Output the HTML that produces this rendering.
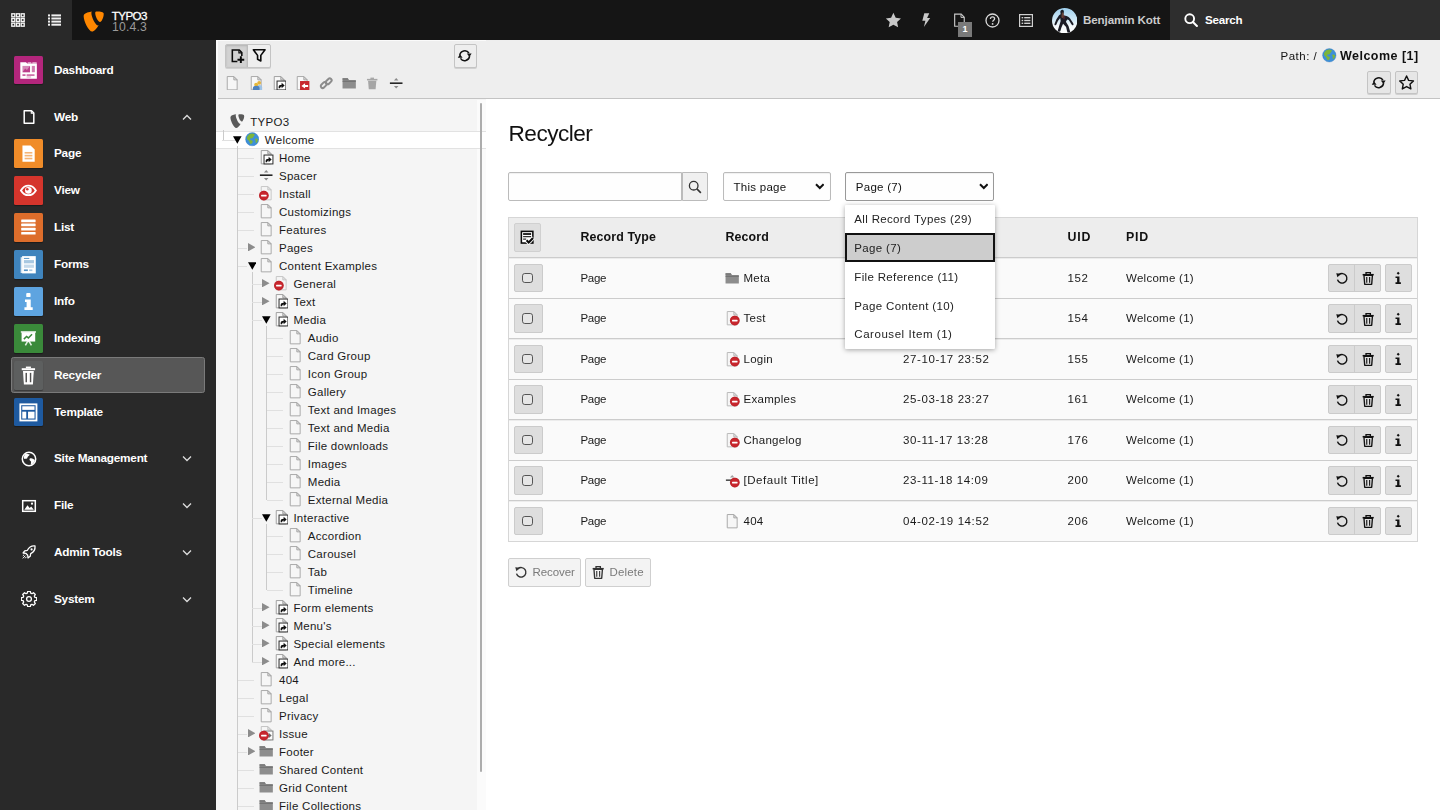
<!DOCTYPE html>
<html lang="en"><head><meta charset="utf-8"><title>Recycler - TYPO3</title>
<style>
*{box-sizing:border-box;margin:0;padding:0}
html,body{width:1440px;height:810px;overflow:hidden;background:#fff}
body{position:relative;font-family:"Liberation Sans",sans-serif;font-size:11.6px;color:#111;line-height:16px}
.abs,.tt,.ti,.td,.ml,.mi,.gi,.chev,.ta,.vl,.hl,.tr,.cb,.bg2,.bi,.tsel,.mact{position:absolute}
svg{display:block}
/* top bar */
#top{position:absolute;left:0;top:0;width:1440px;height:40px;background:#151515}
#topl{position:absolute;left:0;top:0;width:72px;height:40px;background:#292929}
#search{position:absolute;left:1170px;top:0;width:270px;height:40px;background:#2e2e2e}
.tb{position:absolute;color:#ccc;font-weight:bold;white-space:nowrap}
/* module menu */
#menu{position:absolute;left:0;top:40px;width:216px;height:770px;background:#292929}
.mi{left:14.3px;width:28.8px;height:28.8px;border-radius:1.5px;box-shadow:0 1px 1px rgba(0,0,0,.35)}
.gi{left:20.6px}
.ml{left:54px;color:#fff;font-weight:bold;font-size:11.800px;letter-spacing:-.25px;white-space:nowrap;line-height:16px}
.chev{left:182px}
.mact{left:11.300px;top:357.200px;width:193.400px;height:35.800px;background:#575757;border:1px solid #7a7a7a;border-radius:2.500px}
/* tree */
#treebar{position:absolute;left:216px;top:40px;width:270px;height:58.500px;background:#eeeeee;border-bottom:1px solid #c3c3c3}
#tree{position:absolute;left:216px;top:98.500px;width:270px;height:712px;background:#f5f5f5}
.tt{white-space:nowrap;font-size:11.500px;letter-spacing:.27px;color:#1a1a1a;line-height:16px}
.vl{width:1px;background:#cbcbcb}
.hl{height:1px;background:#e0e0e0}
.tsel{left:216px;width:270px;height:18px;background:#fff;border-top:1px solid #e2e2e2;border-bottom:1px solid #e2e2e2}
#sb{position:absolute;left:479.800px;top:103px;width:2.300px;height:669px;background:#adadad;border-radius:1px}
/* doc header */
#dochead{position:absolute;left:486px;top:40px;width:954px;height:58.500px;background:#eeeeee;border-bottom:1px solid #c3c3c3}
.btn{position:absolute;background:#e6e6e6;border:1px solid #c4c4c4;border-radius:2px;box-shadow:0 1px 0 rgba(0,0,0,.12)}
.btn svg{position:absolute}
/* content */
h1{position:absolute;left:508.500px;top:119px;font-size:22.600px;font-weight:normal;letter-spacing:-.5px;line-height:30px;color:#111}
.inp{position:absolute;background:#fefefe;border:1px solid #bbb;border-radius:2px;box-shadow:inset 0 1px 1px rgba(0,0,0,.06)}
.sel span{position:absolute;left:9.500px;top:5.700px;font-size:11.500px;letter-spacing:.27px;white-space:nowrap}
.sel svg{position:absolute;right:5.200px;top:10.300px}
#tbl{position:absolute;left:508px;top:217px;width:910px;height:325px;background:#fafafa;border:1px solid #d6d6d6}
#thead{position:absolute;left:509px;top:218px;width:908px;height:39px;background:#ededed}
.th{position:absolute;top:229.200px;font-weight:bold;font-size:12.400px;letter-spacing:.12px;line-height:16px;white-space:nowrap}
.tr{left:509px;width:908px;height:1px;background:#ccc}
.td{white-space:nowrap;font-size:11.500px;letter-spacing:.27px;line-height:16px;color:#1a1a1a}
.cb{left:514px;width:29px;height:28.500px;background:#dedede;border:1px solid #cbcbcb;border-radius:2px}
.cb i{position:absolute;left:7.200px;top:7.800px;width:10.500px;height:10.500px;border:1.500px solid #555;border-radius:2.800px;background:#e6e6e6}
.bg2{left:1328px;width:53px;height:28.500px;background:#dedede;border:1px solid #cbcbcb;border-radius:2px}
.bg2 b{position:absolute;left:25px;top:0;width:1px;height:100%;background:#cbcbcb}
.bg2 span,.bi span{position:absolute;top:6.300px}
.bi{left:1385px;width:27px;height:28.500px;background:#dedede;border:1px solid #cbcbcb;border-radius:2px}
.bi span{left:5.300px}
/* dropdown */
.dd{position:absolute;left:845px;top:204.500px;width:149.500px;height:144px;background:#fff;box-shadow:0 1px 5px rgba(0,0,0,.35);border-radius:1px}
.op{position:absolute;left:0;width:100%;height:28.800px}
.op span{position:absolute;left:9.300px;top:6.100px;font-size:11.500px;letter-spacing:.27px;white-space:nowrap;color:#222}
.op.sel{background:#cdcdcd;border:2px solid #111}
.op.sel span{left:7.300px;top:4.100px}
.fbtn{position:absolute;top:558px;height:29px;background:#f3f3f3;border:1px solid #cfcfcf;border-radius:2px;color:#7a7a7a;font-size:11.500px;letter-spacing:.15px}
.fbtn svg{position:absolute;left:4.800px;top:6.300px}
.fbtn span{position:absolute;left:23.600px;top:5.300px}
#wrap{position:absolute;left:0;top:0;width:1440px;height:810px;overflow:hidden;filter:blur(.25px)}

</style></head>
<body>
<div id="wrap">
<div id="top"></div>
<div id="topl"></div>
<div id="search"></div>
<!-- topbar left icons -->
<svg class="abs" style="left:11px;top:13px" width="14" height="14" viewBox="0 0 14 14"><g fill="none" stroke="#f4f4f4" stroke-width="1.350"><rect x=".8" y=".8" width="3" height="3"/><rect x="5.500" y=".8" width="3" height="3"/><rect x="10.200" y=".8" width="3" height="3"/><rect x=".8" y="5.500" width="3" height="3"/><rect x="5.500" y="5.500" width="3" height="3"/><rect x="10.200" y="5.500" width="3" height="3"/><rect x=".8" y="10.200" width="3" height="3"/><rect x="5.500" y="10.200" width="3" height="3"/><rect x="10.200" y="10.200" width="3" height="3"/></g></svg>
<svg class="abs" style="left:47.500px;top:14px" width="13" height="12" viewBox="0 0 13 12"><g fill="#f0f0f0"><rect x="0" y=".4" width="2" height="2"/><rect x="3.400" y=".4" width="9.600" height="2"/><rect x="0" y="3.500" width="2" height="2"/><rect x="3.400" y="3.500" width="9.600" height="2"/><rect x="0" y="6.600" width="2" height="2"/><rect x="3.400" y="6.600" width="9.600" height="2"/><rect x="0" y="9.700" width="2" height="2"/><rect x="3.400" y="9.700" width="9.600" height="2"/></g></svg>
<!-- logo -->
<svg class="abs" style="left:82.500px;top:10.500px" width="21" height="21" viewBox="0 0 16 16"><path d="M11.9 10.900c-.2.100-.4.100-.6.100-2 0-4.900-6.900-4.900-9.200 0-.9.200-1.100.5-1.400C4.500.7 1.700 1.600.8 2.700.6 3 .5 3.400.5 4c0 3.600 3.800 11.700 6.500 11.700 1.300 0 3.400-2 4.900-4.800" fill="#ff8700"/><path d="M10.800.3c2.500 0 5 .4 5 1.800 0 2.900-1.800 6.300-2.800 6.300-1.600 0-3.700-4.600-3.700-6.900C9.300.5 9.700.3 10.800.3" fill="#ff8700"/></svg>
<div class="abs" style="left:111.700px;top:8.800px;color:#fff;font-size:11.600px;line-height:13px;letter-spacing:-.55px;white-space:nowrap;-webkit-text-stroke:.3px #fff">TYPO3</div>
<div class="abs" style="left:112px;top:21.300px;color:#9a9a9a;font-size:12.200px;line-height:13px;letter-spacing:.2px;white-space:nowrap">10.4.3</div>
<!-- topbar right icons -->
<svg class="abs" style="left:884.500px;top:11.700px" width="16.800" height="16.800" viewBox="0 0 16 16"><path d="M8 .8l2.200 4.700 5 .6-3.700 3.500 1 5L8 12.100l-4.500 2.500 1-5L.8 6.100l5-.6z" fill="#c8c8c8"/></svg>
<svg class="abs" style="left:920px;top:12px" width="12" height="16" viewBox="0 0 12 16"><path d="M4.300 1.200h5L7.100 6h3.100L3.900 15l1.500-6.200H2.300z" fill="#c8c8c8"/></svg>
<svg class="abs" style="left:953px;top:13.300px" width="13.500" height="14.400" viewBox="0 0 14 15"><path d="M1.700 1.200h6.800l3.200 3.200v9.400H1.700z" fill="none" stroke="#c8c8c8" stroke-width="1.200"/><path d="M8.300 1.400v3.200h3.200" fill="none" stroke="#c8c8c8" stroke-width="1"/></svg>
<div class="abs" style="left:957.800px;top:22px;width:14.300px;height:15.100px;background:#7a7a7a;color:#fff;font-size:9px;font-weight:bold;line-height:15.600px;text-align:center">1</div>
<svg class="abs" style="left:984.500px;top:12.500px" width="15" height="15" viewBox="0 0 15 15"><circle cx="7.500" cy="7.500" r="6.500" fill="none" stroke="#d8d8d8" stroke-width="1.300"/><path d="M5.400 5.900c0-1.300.9-2.100 2.100-2.100s2.100.8 2.100 1.900c0 1.500-1.900 1.600-1.900 3.100" fill="none" stroke="#d8d8d8" stroke-width="1.300"/><circle cx="7.600" cy="10.900" r=".9" fill="#d8d8d8"/></svg>
<svg class="abs" style="left:1019px;top:13.500px" width="14" height="13" viewBox="0 0 14 13"><rect x=".6" y=".6" width="12.800" height="11.800" fill="none" stroke="#d0d0d0" stroke-width="1.200"/><g fill="#d0d0d0"><rect x="2.600" y="3" width="1.600" height="1.400"/><rect x="5.200" y="3" width="6.200" height="1.400"/><rect x="2.600" y="5.800" width="1.600" height="1.400"/><rect x="5.200" y="5.800" width="6.200" height="1.400"/><rect x="2.600" y="8.600" width="1.600" height="1.400"/><rect x="5.200" y="8.600" width="6.200" height="1.400"/></g></svg>
<!-- avatar -->
<svg class="abs" style="left:1051.900px;top:7.700px" width="25.400" height="25.400" viewBox="0 0 25.400 25.400"><defs><clipPath id="av"><circle cx="12.700" cy="12.700" r="12.700"/></clipPath><linearGradient id="sky" x1="0" y1="0" x2="0" y2="1"><stop offset="0" stop-color="#9fd0ee"/><stop offset=".45" stop-color="#cfe8f6"/><stop offset=".7" stop-color="#f4f8fb"/><stop offset="1" stop-color="#ffffff"/></linearGradient><filter id="bl" x="-20%" y="-20%" width="140%" height="140%"><feGaussianBlur stdDeviation=".45"/></filter></defs><g clip-path="url(#av)"><rect width="25.400" height="25.400" fill="url(#sky)"/><g filter="url(#bl)"><path d="M8.300 3.800c.3-1.500 1.500-2.300 2.500-2 1 .3 1.300 1.500 1 2.800l-.5 2.600 3.300.8c1.500.4 2.600 1.300 3.500 2.600l2.800 4.200c.7 1 .9 2.200.2 2.500-.7.300-1.300-.4-1.800-1.300l-2.500-4-1.600-.6-1.300 2.300 2.600 4.300 1.700 5.800c.2.800-.5 1.100-1.300 1l-1.500-.3-1.300-5.500-3-3.300-1.600 3.500-1.100 3.900c-.2.700-1.100.8-1.900.6-.7-.2-.8-.7-.6-1.400l1.300-4.600 1.500-4.700-.5-3.100-2.300 3.100-1.500 3.600c-.3.700-1 .9-1.500.6-.5-.3-.5-.9-.3-1.500l1.700-4.100 2.600-4c.5-.8 1-1.200 1.800-1.300z" fill="#1b1d26"/><path d="M10 4.500c.8-.2 1.600.3 1.700 1.200l.3 2.600c.1 1-.5 1.700-1.300 1.800-.8 0-1.300-.7-1.300-1.600z" fill="#7a4a3a" opacity=".8"/><path d="M11.500 7.500l2 .8-.8 3.200-1.700-.4z" fill="#5a2a30" opacity=".7"/></g></g></svg>
<div class="tb" style="left:1083px;top:12px;font-size:11.600px;letter-spacing:-.1px">Benjamin Kott</div>
<svg class="abs" style="left:1184px;top:13px" width="14" height="14" viewBox="0 0 14 14"><circle cx="5.700" cy="5.700" r="4.400" fill="none" stroke="#fff" stroke-width="1.900"/><path d="M8.900 8.900l4 4" stroke="#fff" stroke-width="2.100" stroke-linecap="round"/></svg>
<div class="tb" style="left:1205px;top:12px;color:#fff;font-size:11.600px;letter-spacing:-.2px">Search</div>

<!-- module menu -->
<div id="menu"></div>
<div class="mact"></div>
<div class="mi" style="top:55.6px;background:#b3267c;"><svg width="28.8" height="28.8" viewBox="0 0 16 16" style=""><path d="M3.500 3.500h3.200l.6.700h5.400v8.400H3.500z" fill="#fff"/><rect x="7.600" y="3.600" width="2" height=".5" fill="#fff"/><rect x="10.200" y="3.600" width="2.400" height=".5" fill="#fff"/><rect x="4.700" y="5.500" width="4.200" height="3.500" fill="#b3267c" opacity=".55"/><path d="M4.700 9l1.500-2 1 .8 1.700-2.200V9z" fill="#b3267c" opacity=".75"/><rect x="9.900" y="5.500" width="1.700" height="3.500" fill="#b3267c" opacity=".6"/><rect x="4.700" y="10.200" width="1.700" height=".8" fill="#b3267c" opacity=".9"/><rect x="7" y="10.200" width="4.400" height=".8" fill="#b3267c" opacity=".8"/><rect x="7" y="11.400" width="2.500" height=".5" fill="#b3267c" opacity=".5"/></svg></div>
<div class="ml" style="top:61.5px">Dashboard</div>
<div class="mi" style="top:139.4px;background:#f08c29;"><svg width="28.8" height="28.8" viewBox="0 0 16 16" style=""><path d="M4.700 3.600h4.500l2.300 2.300v6.700H4.700z" fill="#fff"/><rect x="5.900" y="7.200" width="4.300" height=".9" fill="#f08c29" opacity=".65"/><rect x="5.900" y="8.800" width="4.300" height=".9" fill="#f08c29" opacity=".65"/><rect x="5.900" y="10.400" width="4.300" height=".9" fill="#f08c29" opacity=".65"/></svg></div>
<div class="ml" style="top:145.3px">Page</div>
<div class="mi" style="top:176.3px;background:#d5352c;"><svg width="28.8" height="28.8" viewBox="0 0 16 16" style=""><g transform="translate(8 8) scale(.88) translate(-8 -8)"><path d="M3.300 8c1.200-2 2.900-3 4.700-3s3.500 1 4.700 3c-1.200 2-2.900 3-4.700 3s-3.500-1-4.700-3z" fill="none" stroke="#fff" stroke-width="1.200"/><circle cx="8" cy="8" r="2.100" fill="#fff"/><circle cx="7.300" cy="7.300" r=".8" fill="#d5352c"/></g></svg></div>
<div class="ml" style="top:182.2px">View</div>
<div class="mi" style="top:213.2px;background:#dd6d2b;"><svg width="28.8" height="28.8" viewBox="0 0 16 16" style=""><rect x="4" y="3.6" width="8" height="1.500" rx=".3" fill="#fff"/><rect x="4" y="5.9" width="8" height="1.500" rx=".3" fill="#fff"/><rect x="4" y="8.2" width="8" height="1.500" rx=".3" fill="#fff"/><rect x="4" y="10.5" width="8" height="1.500" rx=".3" fill="#fff"/></svg></div>
<div class="ml" style="top:219.1px">List</div>
<div class="mi" style="top:250.1px;background:#3f84bd;"><svg width="28.8" height="28.8" viewBox="0 0 16 16" style=""><rect x="3.700" y="4" width="1" height="8.800" fill="#fff" opacity=".8"/><rect x="4.500" y="3.400" width="7.600" height="9.600" fill="#fff"/><rect x="5.500" y="4.400" width="3" height=".6" fill="#3f84bd" opacity=".8"/><rect x="5.500" y="5.600" width="5.600" height="1.800" fill="#3f84bd" opacity=".45"/><rect x="5.500" y="8.100" width="5.600" height="1.800" fill="#3f84bd" opacity=".3"/><rect x="5.500" y="10.800" width="2.200" height=".9" fill="#3f84bd" opacity=".9"/><rect x="8.400" y="10.800" width="1.800" height=".9" fill="#3f84bd" opacity=".45"/></svg></div>
<div class="ml" style="top:256.0px">Forms</div>
<div class="mi" style="top:287.0px;background:#5ea4e0;"><svg width="28.8" height="28.8" viewBox="0 0 16 16" style=""><rect x="6.800" y="3.400" width="2.400" height="2.200" rx=".5" fill="#fff"/><path d="M6.100 6.900h3.200v4.300h1.100v1.600H5.800v-1.600h1.200V8.400H6.100z" fill="#fff"/></svg></div>
<div class="ml" style="top:292.9px">Info</div>
<div class="mi" style="top:323.9px;background:#3a8a3a;"><svg width="28.8" height="28.8" viewBox="0 0 16 16" style=""><g transform="translate(8 7.900) scale(.84) translate(-8 -8)"><rect x="3.500" y="4" width="9" height="6.200" fill="#fff"/><path d="M5 8.600l1.800-1.800 1.200 1 2.400-2.400" stroke="#3a8a3a" stroke-width="1" fill="none"/><path d="M6 12.800l1.400-2.600h1.200l1.400 2.600" stroke="#fff" stroke-width="1" fill="none" opacity=".85"/><rect x="3" y="3.400" width="10" height=".9" fill="#fff"/></g></svg></div>
<div class="ml" style="top:329.8px">Indexing</div>
<div class="mi" style="top:360.8px;background:#5d5f5f;"><svg width="28.8" height="28.8" viewBox="0 0 16 16" style=""><path d="M5 5.500h6l-.5 7.500h-5z" fill="#fff"/><rect x="4.300" y="4" width="7.400" height="1.100" fill="#fff"/><rect x="6.600" y="3.100" width="2.800" height="1" fill="#fff"/><rect x="6.400" y="6.600" width=".8" height="5.200" fill="#505050"/><rect x="8.800" y="6.600" width=".8" height="5.200" fill="#505050"/></svg></div>
<div class="ml" style="top:366.7px">Recycler</div>
<div class="mi" style="top:397.7px;background:#1e5aa0;"><svg width="28.8" height="28.8" viewBox="0 0 16 16" style=""><rect x="3.500" y="3.500" width="9" height="9" fill="none" stroke="#fff" stroke-width="1"/><rect x="4.600" y="4.600" width="6.800" height="2" fill="#fff"/><rect x="4.600" y="7.600" width="2.200" height="3.800" fill="#fff"/><rect x="7.800" y="7.600" width="3.600" height="3.800" fill="#fff"/></svg></div>
<div class="ml" style="top:403.6px">Template</div>
<div class="gi" style="top:109.0px"><svg width="16" height="16" viewBox="0 0 16 16" style=""><path d="M3.200 1.700h7.300l2.300 2.300v10.300H3.200z" fill="none" stroke="#fff" stroke-width="1.500" stroke-linejoin="round"/><path d="M10.300 1.900v2.300h2.300" fill="none" stroke="#fff" stroke-width="1.100"/></svg></div>
<div class="ml" style="top:108.5px">Web</div>
<svg class="chev" style="top:113.5px" width="10" height="7" viewBox="0 0 10 7"><path d="M1 5.500L5 1.500l4 4" fill="none" stroke="#ddd" stroke-width="1.300"/></svg>
<div class="gi" style="top:450.8px"><svg width="16" height="16" viewBox="0 0 16 16" style=""><circle cx="8" cy="8" r="6.700" fill="none" stroke="#fff" stroke-width="1.500"/><path d="M4.600 2.800c1.500-.4 2.400.7 3.900.4.300 1.200-.7 1.600-1.500 2.200-.8.600-.2 1.600-1.200 2.100-.9.500-1.900-.2-2.700.4-.5-1.800.1-3.900 1.500-5.100zM9.300 7.300c1.100-.3 2.200.1 2.900.8.600.6 1.200.4 1.700 1-.4 2-1.800 3.900-3.700 4.700-.7-.8-.2-1.800-.1-2.700.1-1.100-1.200-1.300-1.500-2.200-.3-.7.100-1.400.7-1.600z" fill="#fff"/></svg></div>
<div class="ml" style="top:450.3px">Site Management</div>
<svg class="chev" style="top:455.3px" width="10" height="7" viewBox="0 0 10 7"><path d="M1 1.500l4 4 4-4" fill="none" stroke="#ddd" stroke-width="1.300"/></svg>
<div class="gi" style="top:497.6px"><svg width="16" height="16" viewBox="0 0 16 16" style=""><rect x="1.700" y="2.700" width="12.600" height="10.600" fill="none" stroke="#fff" stroke-width="1.500"/><path d="M3.300 11.700l3.200-4.400 2.100 2.700 1.600-1.600 2.600 3.300z" fill="#fff"/><circle cx="11" cy="5.700" r="1.100" fill="#fff"/></svg></div>
<div class="ml" style="top:497.1px">File</div>
<svg class="chev" style="top:502.1px" width="10" height="7" viewBox="0 0 10 7"><path d="M1 1.500l4 4 4-4" fill="none" stroke="#ddd" stroke-width="1.300"/></svg>
<div class="gi" style="top:544.4px"><svg width="16" height="16" viewBox="0 0 16 16" style=""><path d="M14 2c-3.300-.4-6 1.200-7.600 4.300l-2.700.5-1.600 2.200 2.700.3 1.900 1.900.3 2.700 2.200-1.600.5-2.700c3.100-1.600 4.700-4.300 4.300-7.600z" fill="none" stroke="#fff" stroke-width="1.300" stroke-linejoin="round"/><circle cx="10.600" cy="5.400" r="1.100" fill="#fff"/><path d="M4.300 11.700l-2.500 2.700M5.400 12.800l-1.200 1.500M3.200 10.700l-1.400 1.200" stroke="#fff" stroke-width="1"/></svg></div>
<div class="ml" style="top:543.9px">Admin Tools</div>
<svg class="chev" style="top:548.9px" width="10" height="7" viewBox="0 0 10 7"><path d="M1 1.500l4 4 4-4" fill="none" stroke="#ddd" stroke-width="1.300"/></svg>
<div class="gi" style="top:591.2px"><svg width="16" height="16" viewBox="0 0 16 16" style=""><path d="M6.700 1.300h2.600l.4 1.900 1.200.5 1.600-1 1.800 1.800-1 1.600.5 1.200 1.900.4v2.600l-1.900.4-.5 1.200 1 1.600-1.800 1.800-1.600-1-1.200.5-.4 1.900H6.700l-.4-1.900-1.200-.5-1.600 1-1.800-1.800 1-1.600-.5-1.200-1.900-.4V7.700l1.900-.4.5-1.200-1-1.600 1.800-1.800 1.600 1 1.200-.5z" fill="none" stroke="#fff" stroke-width="1.300" stroke-linejoin="round" transform="translate(0 -1)"/><circle cx="8" cy="8" r="2.400" fill="none" stroke="#fff" stroke-width="1.300"/></svg></div>
<div class="ml" style="top:590.7px">System</div>
<svg class="chev" style="top:595.7px" width="10" height="7" viewBox="0 0 10 7"><path d="M1 1.500l4 4 4-4" fill="none" stroke="#ddd" stroke-width="1.300"/></svg>

<!-- tree toolbar -->
<div id="treebar"></div>
<div class="abs" style="left:216px;top:40px;width:270px;height:1px;background:#fafafa"></div><div class="abs" style="left:216px;top:40px;width:1.500px;height:770px;background:#fbfbfb"></div>
<div class="btn" style="left:225px;top:44px;width:46px;height:23.500px;background:#eee"></div>
<div class="abs" style="left:226px;top:45px;width:22px;height:21.500px;background:#d2d2d2;border-right:1px solid #bcbcbc;border-radius:1px 0 0 1px;box-shadow:inset 0 1px 2px rgba(0,0,0,.15)"></div>
<svg class="abs" style="left:229.600px;top:47.800px" width="15.500" height="15.500" viewBox="0 0 16 16"><path d="M7.600 14H2.400V2h7.200l2.600 2.600v3.600" fill="none" stroke="#0a0a0a" stroke-width="1.600"/><path d="M9.200 2.400v2.700h2.700" fill="none" stroke="#0a0a0a" stroke-width="1.200"/><path d="M11.200 8.600v7M7.700 12.100h7" stroke="#0a0a0a" stroke-width="2"/></svg>
<svg class="abs" style="left:252.300px;top:48px" width="14.400" height="14.400" viewBox="0 0 16 16"><path d="M1.500 2h13L9.800 8.200v6.300L6.200 12.600V8.200z" fill="none" stroke="#0a0a0a" stroke-width="1.800" stroke-linejoin="round"/></svg>
<div class="btn" style="left:453.500px;top:44px;width:23px;height:23.500px;background:#eee"></div>
<svg class="abs refresh" style="left:457.400px;top:48px" width="15.400" height="15.400" viewBox="0 0 16 16"><path d="M2.900 7.600A5.200 5.200 0 0 1 12.400 5.200" fill="none" stroke="#111" stroke-width="1.600"/><path d="M13.100 8.400A5.200 5.200 0 0 1 3.600 10.800" fill="none" stroke="#111" stroke-width="1.600"/><path d="M10.200 5.800h5l-2.300 3.600zM5.800 10.200h-5l2.300-3.600z" fill="#111"/></svg>
<div class="abs" style="left:225.2px;top:75.700px"><svg width="14.4" height="14.4" viewBox="0 0 16 16" style=""><path d="M2.5 .6h7.3l3.700 3.700v11.100h-11z" fill="#f6f6f6" stroke="#a2a2a2" stroke-width="1"/><path d="M9.800 .6v3.700h3.700z" fill="#dcdcdc" stroke="#a2a2a2" stroke-width="1" stroke-linejoin="round"/></svg></div>
<div class="abs" style="left:248.5px;top:75.700px"><svg width="14.400" height="14.400" viewBox="0 0 16 16"><path d="M2.500 .6h7.300l3.700 3.700v11.100h-11z" fill="#f8f8f8" stroke="#a2a2a2"/><path d="M9.800 .6v3.700h3.700z" fill="#dcdcdc" stroke="#a2a2a2" stroke-linejoin="round"/><circle cx="11.300" cy="7.600" r="2.100" fill="#e3b23c"/><path d="M8 15.600v-3q0-2.600 3.300-2.600t3.300 2.600v3z" fill="#9ec3e6"/><circle cx="8" cy="9.600" r="2.200" fill="#e8b938"/><path d="M4.300 16v-2.400q0-2.700 3.700-2.700t3.700 2.700V16z" fill="#4f82bd"/></svg></div>
<div class="abs" style="left:271.9px;top:75.700px"><svg width="14.4" height="14.4" viewBox="0 0 16 16" style=""><path d="M2.5 .6h7.3l3.700 3.700v11.100h-11z" fill="#f8f8f8" stroke="#9a9a9a"/><path d="M9.800 .6v3.700h3.700z" fill="#dcdcdc" stroke="#9a9a9a" stroke-linejoin="round"/><rect x="5.600" y="5.600" width="9.900" height="9.900" fill="#fff" stroke="#2a2a2a" stroke-width="1.100"/><path d="M7.400 13.600v-1.300q0-2.700 3.300-2.700V7.600l3.400 3-3.400 3v-2q-1.700 0-1.700 2z" fill="#111"/></svg></div>
<div class="abs" style="left:295.2px;top:75.700px"><svg width="14.400" height="14.400" viewBox="0 0 16 16"><path d="M2.500 .6h7.300l3.700 3.700v11.100h-11z" fill="#f8f8f8" stroke="#a2a2a2"/><path d="M9.800 .6v3.700h3.700z" fill="#dcdcdc" stroke="#a2a2a2" stroke-linejoin="round"/><rect x="5.600" y="5.600" width="10.400" height="10.400" fill="#c8262d"/><path d="M14.600 9.900v2.200h-3.400v1.800L7.100 11l4.100-2.900v1.800z" fill="#fff"/></svg></div>
<div class="abs" style="left:318.5px;top:75.700px"><svg width="14.400" height="14.400" viewBox="0 0 16 16"><g fill="none" stroke="#8c8c8c" stroke-width="2.200"><rect x="1.500" y="8" width="7.500" height="4.200" rx="2.100" transform="rotate(-45 5.200 10.100)"/><rect x="7" y="3.800" width="7.500" height="4.200" rx="2.100" transform="rotate(-45 10.800 5.900)"/></g></svg></div>
<div class="abs" style="left:341.8px;top:75.700px"><svg width="14.4" height="14.4" viewBox="0 0 16 16" style=""><path d="M.6 2.600h5.800l1.200 1.800h7.800v9.400H.6z" fill="#8d8d8d"/><rect x=".6" y="5.300" width="14.800" height="1.100" fill="#6c6c6c"/><path d="M.6 2.600h5.800l1.100 1.700H.6z" fill="#777"/></svg></div>
<div class="abs" style="left:365.1px;top:75.700px"><svg width="14.400" height="14.400" viewBox="0 0 16 16"><path d="M3.400 5.400h9.200l-.8 9.400H4.200z" fill="#a6a6a6"/><rect x="2.200" y="3.200" width="11.600" height="1.700" fill="#a6a6a6"/><rect x="6" y="1.800" width="4" height="1.500" fill="#a6a6a6"/></svg></div>
<div class="abs" style="left:389px;top:75.700px"><svg width="14.4" height="14.4" viewBox="0 0 16 16" style=""><rect x="1" y="7.100" width="14" height="1.800" fill="#262626"/><path d="M8 2.300l2.500 2.800h-5z M8 13.800l2.500-2.800h-5z" fill="#8a8a8a"/></svg></div>

<!-- tree -->
<div id="tree"></div>
<div class="abs" style="left:476.500px;top:99.500px;width:9.500px;height:711px;background:#fbfbfb"></div>
<div class="tsel" style="top:130.5px"></div>
<div class="hl" style="left:222.0px;top:139.5px;width:15.0px"></div>
<div class="vl" style="left:222.5px;top:129.5px;height:10.0px"></div>
<div class="vl" style="left:237.0px;top:145.5px;height:664.5px"></div>
<div class="vl" style="left:251.5px;top:271.5px;height:390.0px"></div>
<div class="vl" style="left:266.0px;top:325.5px;height:174.0px"></div>
<div class="vl" style="left:266.0px;top:523.5px;height:66.0px"></div>
<div class="ti" style="left:230.3px;top:114.3px"><svg width="14.4" height="14.4" viewBox="0 0 16 16" style=""><path d="M11.9 10.900c-.2.100-.4.100-.6.100-2 0-4.900-6.900-4.900-9.200 0-.9.200-1.100.5-1.400C4.500.7 1.700 1.600.8 2.700.6 3 .5 3.400.5 4c0 3.600 3.800 11.700 6.500 11.700 1.300 0 3.400-2 4.900-4.800" fill="#5a5a5a"/><path d="M10.800.3c2.500 0 5 .4 5 1.800 0 2.900-1.800 6.300-2.800 6.300-1.600 0-3.700-4.600-3.700-6.900C9.300.5 9.700.3 10.800.3" fill="#5a5a5a"/></svg></div>
<div class="tt" style="left:250.3px;top:113.7px">TYPO3</div>
<svg class="ta" style="left:233.3px;top:135.8px" width="8.6" height="8" viewBox="0 0 10 9"><path d="M0 0h10L5 9z" fill="#000"/></svg>
<div class="ti" style="left:244.8px;top:132.3px"><svg width="14.4" height="14.4" viewBox="0 0 16 16" style=""><circle cx="8" cy="8" r="7.4" fill="#3d8fd8"/><path d="M5.2 2.2c1.8-.9 4.2-.8 5.6.3-.5 1-.1 1.900-1.200 2.400-.9.400-.4 1.600-1.400 2-.8.300-1.800-.2-2.400.5-.7.900.400 1.800 1.400 1.900 1.100.100 1.500.9 1.300 1.900-.2 1.100-1.200 1.800-2.100 2.300-1.100-.6-1.200-2-1.700-3.100-.6-1.300-2.300-1.600-2.500-3.100-.2-1.900 1.200-4 3-5.100z" fill="#7db53a"/><path d="M11.8 7.200c.9-.3 2 .2 2.600 1-.1 1.600-.9 3.200-2.100 4.200-.7-.5-.6-1.400-.4-2.100.2-.9-.8-1.300-.7-2.100 0-.5.200-.9.600-1z" fill="#7db53a"/><circle cx="8" cy="8" r="7.4" fill="none" stroke="#2b6cb0" stroke-width=".5" opacity=".6"/></svg></div>
<div class="tt" style="left:264.8px;top:131.7px">Welcome</div>
<div class="hl" style="left:237.5px;top:157.5px;width:16.3px"></div>
<div class="ti" style="left:259.2px;top:150.3px"><svg width="14.4" height="14.4" viewBox="0 0 16 16" style=""><path d="M2.5 .6h7.3l3.700 3.700v11.100h-11z" fill="#f8f8f8" stroke="#9a9a9a"/><path d="M9.800 .6v3.700h3.700z" fill="#dcdcdc" stroke="#9a9a9a" stroke-linejoin="round"/><rect x="5.600" y="5.600" width="9.900" height="9.900" fill="#fff" stroke="#2a2a2a" stroke-width="1.100"/><path d="M7.400 13.600v-1.300q0-2.700 3.300-2.700V7.600l3.400 3-3.400 3v-2q-1.700 0-1.700 2z" fill="#111"/></svg></div>
<div class="tt" style="left:279.0px;top:149.7px">Home</div>
<div class="hl" style="left:237.5px;top:175.5px;width:16.3px"></div>
<div class="ti" style="left:259.2px;top:168.3px"><svg width="14.4" height="14.4" viewBox="0 0 16 16" style=""><rect x="1" y="7.100" width="14" height="1.800" fill="#262626"/><path d="M8 2.300l2.500 2.800h-5z M8 13.800l2.500-2.800h-5z" fill="#8a8a8a"/></svg></div>
<div class="tt" style="left:279.0px;top:167.7px">Spacer</div>
<div class="hl" style="left:237.5px;top:193.5px;width:16.3px"></div>
<div class="ti" style="left:259.2px;top:186.3px"><svg width="14.4" height="14.4" viewBox="0 0 16 16" style=""><g opacity=".6"><path d="M2.5 .6h7.3l3.700 3.700v11.100h-11z" fill="#f6f6f6" stroke="#a2a2a2" stroke-width="1"/><path d="M9.800 .6v3.700h3.700z" fill="#dcdcdc" stroke="#a2a2a2" stroke-width="1" stroke-linejoin="round"/></g><circle cx="5.4" cy="10.7" r="5.4" fill="#c8262d"/><circle cx="5.4" cy="10.7" r="4.9" fill="none" stroke="#a81c22" stroke-width=".6" opacity=".6"/><rect x="2.3000000000000003" y="9.75" width="6.200" height="1.900" rx=".5" fill="#fff"/></svg></div>
<div class="tt" style="left:279.0px;top:185.7px">Install</div>
<div class="hl" style="left:237.5px;top:211.5px;width:16.3px"></div>
<div class="ti" style="left:259.2px;top:204.3px"><svg width="14.4" height="14.4" viewBox="0 0 16 16" style=""><path d="M2.5 .6h7.3l3.700 3.700v11.100h-11z" fill="#f6f6f6" stroke="#a2a2a2" stroke-width="1"/><path d="M9.800 .6v3.700h3.700z" fill="#dcdcdc" stroke="#a2a2a2" stroke-width="1" stroke-linejoin="round"/></svg></div>
<div class="tt" style="left:279.0px;top:203.7px">Customizings</div>
<div class="hl" style="left:237.5px;top:229.5px;width:16.3px"></div>
<div class="ti" style="left:259.2px;top:222.3px"><svg width="14.4" height="14.4" viewBox="0 0 16 16" style=""><path d="M2.5 .6h7.3l3.700 3.700v11.100h-11z" fill="#f6f6f6" stroke="#a2a2a2" stroke-width="1"/><path d="M9.800 .6v3.700h3.700z" fill="#dcdcdc" stroke="#a2a2a2" stroke-width="1" stroke-linejoin="round"/></svg></div>
<div class="tt" style="left:279.0px;top:221.7px">Features</div>
<div class="hl" style="left:237.5px;top:247.5px;width:9.7px"></div>
<svg class="ta" style="left:247.9px;top:243.1px" width="7.6" height="8.4" viewBox="0 0 9 10"><path d="M0 0v10l9-5z" fill="#8c8c8c"/></svg>
<div class="ti" style="left:259.2px;top:240.3px"><svg width="14.4" height="14.4" viewBox="0 0 16 16" style=""><path d="M2.5 .6h7.3l3.700 3.700v11.100h-11z" fill="#f6f6f6" stroke="#a2a2a2" stroke-width="1"/><path d="M9.800 .6v3.700h3.700z" fill="#dcdcdc" stroke="#a2a2a2" stroke-width="1" stroke-linejoin="round"/></svg></div>
<div class="tt" style="left:279.0px;top:239.7px">Pages</div>
<div class="hl" style="left:237.5px;top:265.5px;width:9.7px"></div>
<svg class="ta" style="left:247.7px;top:261.8px" width="8.6" height="8" viewBox="0 0 10 9"><path d="M0 0h10L5 9z" fill="#000"/></svg>
<div class="ti" style="left:259.2px;top:258.3px"><svg width="14.4" height="14.4" viewBox="0 0 16 16" style=""><path d="M2.5 .6h7.3l3.700 3.700v11.100h-11z" fill="#f6f6f6" stroke="#a2a2a2" stroke-width="1"/><path d="M9.800 .6v3.700h3.700z" fill="#dcdcdc" stroke="#a2a2a2" stroke-width="1" stroke-linejoin="round"/></svg></div>
<div class="tt" style="left:279.0px;top:257.7px">Content Examples</div>
<div class="hl" style="left:252.0px;top:283.5px;width:9.6px"></div>
<svg class="ta" style="left:262.3px;top:279.1px" width="7.6" height="8.4" viewBox="0 0 9 10"><path d="M0 0v10l9-5z" fill="#8c8c8c"/></svg>
<div class="ti" style="left:273.6px;top:276.3px"><svg width="14.4" height="14.4" viewBox="0 0 16 16" style=""><g opacity=".6"><path d="M2.5 .6h7.3l3.700 3.700v11.100h-11z" fill="#f6f6f6" stroke="#a2a2a2" stroke-width="1"/><path d="M9.800 .6v3.700h3.700z" fill="#dcdcdc" stroke="#a2a2a2" stroke-width="1" stroke-linejoin="round"/></g><circle cx="5.4" cy="10.7" r="5.4" fill="#c8262d"/><circle cx="5.4" cy="10.7" r="4.9" fill="none" stroke="#a81c22" stroke-width=".6" opacity=".6"/><rect x="2.3000000000000003" y="9.75" width="6.200" height="1.900" rx=".5" fill="#fff"/></svg></div>
<div class="tt" style="left:293.4px;top:275.7px">General</div>
<div class="hl" style="left:252.0px;top:301.5px;width:9.6px"></div>
<svg class="ta" style="left:262.3px;top:297.1px" width="7.6" height="8.4" viewBox="0 0 9 10"><path d="M0 0v10l9-5z" fill="#8c8c8c"/></svg>
<div class="ti" style="left:273.6px;top:294.3px"><svg width="14.4" height="14.4" viewBox="0 0 16 16" style=""><path d="M2.5 .6h7.3l3.700 3.700v11.100h-11z" fill="#f8f8f8" stroke="#9a9a9a"/><path d="M9.800 .6v3.700h3.700z" fill="#dcdcdc" stroke="#9a9a9a" stroke-linejoin="round"/><rect x="5.600" y="5.600" width="9.900" height="9.900" fill="#fff" stroke="#2a2a2a" stroke-width="1.100"/><path d="M7.400 13.600v-1.300q0-2.700 3.300-2.700V7.600l3.400 3-3.400 3v-2q-1.700 0-1.700 2z" fill="#111"/></svg></div>
<div class="tt" style="left:293.4px;top:293.7px">Text</div>
<div class="hl" style="left:252.0px;top:319.5px;width:9.6px"></div>
<svg class="ta" style="left:262.1px;top:315.8px" width="8.6" height="8" viewBox="0 0 10 9"><path d="M0 0h10L5 9z" fill="#000"/></svg>
<div class="ti" style="left:273.6px;top:312.3px"><svg width="14.4" height="14.4" viewBox="0 0 16 16" style=""><path d="M2.5 .6h7.3l3.700 3.700v11.100h-11z" fill="#f8f8f8" stroke="#9a9a9a"/><path d="M9.800 .6v3.700h3.700z" fill="#dcdcdc" stroke="#9a9a9a" stroke-linejoin="round"/><rect x="5.600" y="5.600" width="9.900" height="9.900" fill="#fff" stroke="#2a2a2a" stroke-width="1.100"/><path d="M7.400 13.600v-1.300q0-2.700 3.300-2.700V7.600l3.400 3-3.400 3v-2q-1.700 0-1.700 2z" fill="#111"/></svg></div>
<div class="tt" style="left:293.4px;top:311.7px">Media</div>
<div class="hl" style="left:266.5px;top:337.5px;width:16.1px"></div>
<div class="ti" style="left:288.0px;top:330.3px"><svg width="14.4" height="14.4" viewBox="0 0 16 16" style=""><path d="M2.5 .6h7.3l3.700 3.700v11.100h-11z" fill="#f6f6f6" stroke="#a2a2a2" stroke-width="1"/><path d="M9.800 .6v3.700h3.700z" fill="#dcdcdc" stroke="#a2a2a2" stroke-width="1" stroke-linejoin="round"/></svg></div>
<div class="tt" style="left:307.8px;top:329.7px">Audio</div>
<div class="hl" style="left:266.5px;top:355.5px;width:16.1px"></div>
<div class="ti" style="left:288.0px;top:348.3px"><svg width="14.4" height="14.4" viewBox="0 0 16 16" style=""><path d="M2.5 .6h7.3l3.700 3.700v11.100h-11z" fill="#f6f6f6" stroke="#a2a2a2" stroke-width="1"/><path d="M9.800 .6v3.700h3.700z" fill="#dcdcdc" stroke="#a2a2a2" stroke-width="1" stroke-linejoin="round"/></svg></div>
<div class="tt" style="left:307.8px;top:347.7px">Card Group</div>
<div class="hl" style="left:266.5px;top:373.5px;width:16.1px"></div>
<div class="ti" style="left:288.0px;top:366.3px"><svg width="14.4" height="14.4" viewBox="0 0 16 16" style=""><path d="M2.5 .6h7.3l3.700 3.700v11.100h-11z" fill="#f6f6f6" stroke="#a2a2a2" stroke-width="1"/><path d="M9.800 .6v3.700h3.700z" fill="#dcdcdc" stroke="#a2a2a2" stroke-width="1" stroke-linejoin="round"/></svg></div>
<div class="tt" style="left:307.8px;top:365.7px">Icon Group</div>
<div class="hl" style="left:266.5px;top:391.5px;width:16.1px"></div>
<div class="ti" style="left:288.0px;top:384.3px"><svg width="14.4" height="14.4" viewBox="0 0 16 16" style=""><path d="M2.5 .6h7.3l3.700 3.700v11.100h-11z" fill="#f6f6f6" stroke="#a2a2a2" stroke-width="1"/><path d="M9.800 .6v3.700h3.700z" fill="#dcdcdc" stroke="#a2a2a2" stroke-width="1" stroke-linejoin="round"/></svg></div>
<div class="tt" style="left:307.8px;top:383.7px">Gallery</div>
<div class="hl" style="left:266.5px;top:409.5px;width:16.1px"></div>
<div class="ti" style="left:288.0px;top:402.3px"><svg width="14.4" height="14.4" viewBox="0 0 16 16" style=""><path d="M2.5 .6h7.3l3.700 3.700v11.100h-11z" fill="#f6f6f6" stroke="#a2a2a2" stroke-width="1"/><path d="M9.800 .6v3.700h3.700z" fill="#dcdcdc" stroke="#a2a2a2" stroke-width="1" stroke-linejoin="round"/></svg></div>
<div class="tt" style="left:307.8px;top:401.7px">Text and Images</div>
<div class="hl" style="left:266.5px;top:427.5px;width:16.1px"></div>
<div class="ti" style="left:288.0px;top:420.3px"><svg width="14.4" height="14.4" viewBox="0 0 16 16" style=""><path d="M2.5 .6h7.3l3.700 3.700v11.100h-11z" fill="#f6f6f6" stroke="#a2a2a2" stroke-width="1"/><path d="M9.800 .6v3.700h3.700z" fill="#dcdcdc" stroke="#a2a2a2" stroke-width="1" stroke-linejoin="round"/></svg></div>
<div class="tt" style="left:307.8px;top:419.7px">Text and Media</div>
<div class="hl" style="left:266.5px;top:445.5px;width:16.1px"></div>
<div class="ti" style="left:288.0px;top:438.3px"><svg width="14.4" height="14.4" viewBox="0 0 16 16" style=""><path d="M2.5 .6h7.3l3.700 3.700v11.100h-11z" fill="#f6f6f6" stroke="#a2a2a2" stroke-width="1"/><path d="M9.800 .6v3.700h3.700z" fill="#dcdcdc" stroke="#a2a2a2" stroke-width="1" stroke-linejoin="round"/></svg></div>
<div class="tt" style="left:307.8px;top:437.7px">File downloads</div>
<div class="hl" style="left:266.5px;top:463.5px;width:16.1px"></div>
<div class="ti" style="left:288.0px;top:456.3px"><svg width="14.4" height="14.4" viewBox="0 0 16 16" style=""><path d="M2.5 .6h7.3l3.700 3.700v11.100h-11z" fill="#f6f6f6" stroke="#a2a2a2" stroke-width="1"/><path d="M9.800 .6v3.700h3.700z" fill="#dcdcdc" stroke="#a2a2a2" stroke-width="1" stroke-linejoin="round"/></svg></div>
<div class="tt" style="left:307.8px;top:455.7px">Images</div>
<div class="hl" style="left:266.5px;top:481.5px;width:16.1px"></div>
<div class="ti" style="left:288.0px;top:474.3px"><svg width="14.4" height="14.4" viewBox="0 0 16 16" style=""><path d="M2.5 .6h7.3l3.700 3.700v11.100h-11z" fill="#f6f6f6" stroke="#a2a2a2" stroke-width="1"/><path d="M9.800 .6v3.700h3.700z" fill="#dcdcdc" stroke="#a2a2a2" stroke-width="1" stroke-linejoin="round"/></svg></div>
<div class="tt" style="left:307.8px;top:473.7px">Media</div>
<div class="hl" style="left:266.5px;top:499.5px;width:16.1px"></div>
<div class="ti" style="left:288.0px;top:492.3px"><svg width="14.4" height="14.4" viewBox="0 0 16 16" style=""><path d="M2.5 .6h7.3l3.700 3.700v11.100h-11z" fill="#f6f6f6" stroke="#a2a2a2" stroke-width="1"/><path d="M9.800 .6v3.700h3.700z" fill="#dcdcdc" stroke="#a2a2a2" stroke-width="1" stroke-linejoin="round"/></svg></div>
<div class="tt" style="left:307.8px;top:491.7px">External Media</div>
<div class="hl" style="left:252.0px;top:517.5px;width:9.6px"></div>
<svg class="ta" style="left:262.1px;top:513.8px" width="8.6" height="8" viewBox="0 0 10 9"><path d="M0 0h10L5 9z" fill="#000"/></svg>
<div class="ti" style="left:273.6px;top:510.3px"><svg width="14.4" height="14.4" viewBox="0 0 16 16" style=""><path d="M2.5 .6h7.3l3.700 3.700v11.100h-11z" fill="#f8f8f8" stroke="#9a9a9a"/><path d="M9.800 .6v3.700h3.700z" fill="#dcdcdc" stroke="#9a9a9a" stroke-linejoin="round"/><rect x="5.600" y="5.600" width="9.900" height="9.900" fill="#fff" stroke="#2a2a2a" stroke-width="1.100"/><path d="M7.400 13.600v-1.300q0-2.700 3.300-2.700V7.600l3.400 3-3.400 3v-2q-1.700 0-1.700 2z" fill="#111"/></svg></div>
<div class="tt" style="left:293.4px;top:509.7px">Interactive</div>
<div class="hl" style="left:266.5px;top:535.5px;width:16.1px"></div>
<div class="ti" style="left:288.0px;top:528.3px"><svg width="14.4" height="14.4" viewBox="0 0 16 16" style=""><path d="M2.5 .6h7.3l3.700 3.700v11.100h-11z" fill="#f6f6f6" stroke="#a2a2a2" stroke-width="1"/><path d="M9.800 .6v3.700h3.700z" fill="#dcdcdc" stroke="#a2a2a2" stroke-width="1" stroke-linejoin="round"/></svg></div>
<div class="tt" style="left:307.8px;top:527.7px">Accordion</div>
<div class="hl" style="left:266.5px;top:553.5px;width:16.1px"></div>
<div class="ti" style="left:288.0px;top:546.3px"><svg width="14.4" height="14.4" viewBox="0 0 16 16" style=""><path d="M2.5 .6h7.3l3.700 3.700v11.100h-11z" fill="#f6f6f6" stroke="#a2a2a2" stroke-width="1"/><path d="M9.800 .6v3.700h3.700z" fill="#dcdcdc" stroke="#a2a2a2" stroke-width="1" stroke-linejoin="round"/></svg></div>
<div class="tt" style="left:307.8px;top:545.7px">Carousel</div>
<div class="hl" style="left:266.5px;top:571.5px;width:16.1px"></div>
<div class="ti" style="left:288.0px;top:564.3px"><svg width="14.4" height="14.4" viewBox="0 0 16 16" style=""><path d="M2.5 .6h7.3l3.700 3.700v11.100h-11z" fill="#f6f6f6" stroke="#a2a2a2" stroke-width="1"/><path d="M9.800 .6v3.700h3.700z" fill="#dcdcdc" stroke="#a2a2a2" stroke-width="1" stroke-linejoin="round"/></svg></div>
<div class="tt" style="left:307.8px;top:563.7px">Tab</div>
<div class="hl" style="left:266.5px;top:589.5px;width:16.1px"></div>
<div class="ti" style="left:288.0px;top:582.3px"><svg width="14.4" height="14.4" viewBox="0 0 16 16" style=""><path d="M2.5 .6h7.3l3.700 3.700v11.100h-11z" fill="#f6f6f6" stroke="#a2a2a2" stroke-width="1"/><path d="M9.800 .6v3.700h3.700z" fill="#dcdcdc" stroke="#a2a2a2" stroke-width="1" stroke-linejoin="round"/></svg></div>
<div class="tt" style="left:307.8px;top:581.7px">Timeline</div>
<div class="hl" style="left:252.0px;top:607.5px;width:9.6px"></div>
<svg class="ta" style="left:262.3px;top:603.1px" width="7.6" height="8.4" viewBox="0 0 9 10"><path d="M0 0v10l9-5z" fill="#8c8c8c"/></svg>
<div class="ti" style="left:273.6px;top:600.3px"><svg width="14.4" height="14.4" viewBox="0 0 16 16" style=""><path d="M2.5 .6h7.3l3.700 3.700v11.100h-11z" fill="#f8f8f8" stroke="#9a9a9a"/><path d="M9.800 .6v3.700h3.700z" fill="#dcdcdc" stroke="#9a9a9a" stroke-linejoin="round"/><rect x="5.600" y="5.600" width="9.900" height="9.900" fill="#fff" stroke="#2a2a2a" stroke-width="1.100"/><path d="M7.400 13.600v-1.300q0-2.700 3.300-2.700V7.600l3.400 3-3.400 3v-2q-1.700 0-1.700 2z" fill="#111"/></svg></div>
<div class="tt" style="left:293.4px;top:599.7px">Form elements</div>
<div class="hl" style="left:252.0px;top:625.5px;width:9.6px"></div>
<svg class="ta" style="left:262.3px;top:621.1px" width="7.6" height="8.4" viewBox="0 0 9 10"><path d="M0 0v10l9-5z" fill="#8c8c8c"/></svg>
<div class="ti" style="left:273.6px;top:618.3px"><svg width="14.4" height="14.4" viewBox="0 0 16 16" style=""><path d="M2.5 .6h7.3l3.700 3.700v11.100h-11z" fill="#f8f8f8" stroke="#9a9a9a"/><path d="M9.800 .6v3.700h3.700z" fill="#dcdcdc" stroke="#9a9a9a" stroke-linejoin="round"/><rect x="5.600" y="5.600" width="9.900" height="9.900" fill="#fff" stroke="#2a2a2a" stroke-width="1.100"/><path d="M7.400 13.600v-1.300q0-2.700 3.300-2.700V7.600l3.400 3-3.400 3v-2q-1.700 0-1.700 2z" fill="#111"/></svg></div>
<div class="tt" style="left:293.4px;top:617.7px">Menu's</div>
<div class="hl" style="left:252.0px;top:643.5px;width:9.6px"></div>
<svg class="ta" style="left:262.3px;top:639.1px" width="7.6" height="8.4" viewBox="0 0 9 10"><path d="M0 0v10l9-5z" fill="#8c8c8c"/></svg>
<div class="ti" style="left:273.6px;top:636.3px"><svg width="14.4" height="14.4" viewBox="0 0 16 16" style=""><path d="M2.5 .6h7.3l3.700 3.700v11.100h-11z" fill="#f8f8f8" stroke="#9a9a9a"/><path d="M9.800 .6v3.700h3.700z" fill="#dcdcdc" stroke="#9a9a9a" stroke-linejoin="round"/><rect x="5.600" y="5.600" width="9.900" height="9.900" fill="#fff" stroke="#2a2a2a" stroke-width="1.100"/><path d="M7.400 13.600v-1.300q0-2.700 3.300-2.700V7.600l3.400 3-3.400 3v-2q-1.700 0-1.700 2z" fill="#111"/></svg></div>
<div class="tt" style="left:293.4px;top:635.7px">Special elements</div>
<div class="hl" style="left:252.0px;top:661.5px;width:9.6px"></div>
<svg class="ta" style="left:262.3px;top:657.1px" width="7.6" height="8.4" viewBox="0 0 9 10"><path d="M0 0v10l9-5z" fill="#8c8c8c"/></svg>
<div class="ti" style="left:273.6px;top:654.3px"><svg width="14.4" height="14.4" viewBox="0 0 16 16" style=""><path d="M2.5 .6h7.3l3.700 3.700v11.100h-11z" fill="#f8f8f8" stroke="#9a9a9a"/><path d="M9.800 .6v3.700h3.700z" fill="#dcdcdc" stroke="#9a9a9a" stroke-linejoin="round"/><rect x="5.600" y="5.600" width="9.900" height="9.900" fill="#fff" stroke="#2a2a2a" stroke-width="1.100"/><path d="M7.400 13.600v-1.300q0-2.700 3.300-2.700V7.600l3.400 3-3.400 3v-2q-1.700 0-1.700 2z" fill="#111"/></svg></div>
<div class="tt" style="left:293.4px;top:653.7px">And more...</div>
<div class="hl" style="left:237.5px;top:679.5px;width:16.3px"></div>
<div class="ti" style="left:259.2px;top:672.3px"><svg width="14.4" height="14.4" viewBox="0 0 16 16" style=""><path d="M2.5 .6h7.3l3.700 3.700v11.100h-11z" fill="#f6f6f6" stroke="#a2a2a2" stroke-width="1"/><path d="M9.800 .6v3.700h3.700z" fill="#dcdcdc" stroke="#a2a2a2" stroke-width="1" stroke-linejoin="round"/></svg></div>
<div class="tt" style="left:279.0px;top:671.7px">404</div>
<div class="hl" style="left:237.5px;top:697.5px;width:16.3px"></div>
<div class="ti" style="left:259.2px;top:690.3px"><svg width="14.4" height="14.4" viewBox="0 0 16 16" style=""><path d="M2.5 .6h7.3l3.700 3.700v11.100h-11z" fill="#f6f6f6" stroke="#a2a2a2" stroke-width="1"/><path d="M9.800 .6v3.700h3.700z" fill="#dcdcdc" stroke="#a2a2a2" stroke-width="1" stroke-linejoin="round"/></svg></div>
<div class="tt" style="left:279.0px;top:689.7px">Legal</div>
<div class="hl" style="left:237.5px;top:715.5px;width:16.3px"></div>
<div class="ti" style="left:259.2px;top:708.3px"><svg width="14.4" height="14.4" viewBox="0 0 16 16" style=""><path d="M2.5 .6h7.3l3.700 3.700v11.100h-11z" fill="#f6f6f6" stroke="#a2a2a2" stroke-width="1"/><path d="M9.800 .6v3.700h3.700z" fill="#dcdcdc" stroke="#a2a2a2" stroke-width="1" stroke-linejoin="round"/></svg></div>
<div class="tt" style="left:279.0px;top:707.7px">Privacy</div>
<div class="hl" style="left:237.5px;top:733.5px;width:9.7px"></div>
<svg class="ta" style="left:247.9px;top:729.1px" width="7.6" height="8.4" viewBox="0 0 9 10"><path d="M0 0v10l9-5z" fill="#8c8c8c"/></svg>
<div class="ti" style="left:259.2px;top:726.3px"><svg width="14.4" height="14.4" viewBox="0 0 16 16" style=""><g opacity=".6"><path d="M2.5 .6h7.3l3.700 3.700v11.100h-11z" fill="#f8f8f8" stroke="#9a9a9a"/><path d="M9.800 .6v3.700h3.700z" fill="#dcdcdc" stroke="#9a9a9a" stroke-linejoin="round"/><rect x="5.600" y="5.600" width="9.900" height="9.900" fill="#fff" stroke="#2a2a2a" stroke-width="1.100"/><path d="M7.400 13.600v-1.300q0-2.700 3.300-2.700V7.600l3.400 3-3.400 3v-2q-1.700 0-1.700 2z" fill="#111"/></g><circle cx="5.4" cy="10.7" r="5.4" fill="#c8262d"/><circle cx="5.4" cy="10.7" r="4.9" fill="none" stroke="#a81c22" stroke-width=".6" opacity=".6"/><rect x="2.3000000000000003" y="9.75" width="6.200" height="1.900" rx=".5" fill="#fff"/></svg></div>
<div class="tt" style="left:279.0px;top:725.7px">Issue</div>
<div class="hl" style="left:237.5px;top:751.5px;width:9.7px"></div>
<svg class="ta" style="left:247.9px;top:747.1px" width="7.6" height="8.4" viewBox="0 0 9 10"><path d="M0 0v10l9-5z" fill="#8c8c8c"/></svg>
<div class="ti" style="left:259.2px;top:744.3px"><svg width="14.4" height="14.4" viewBox="0 0 16 16" style=""><path d="M.6 2.600h5.800l1.200 1.800h7.800v9.400H.6z" fill="#8d8d8d"/><rect x=".6" y="5.300" width="14.800" height="1.100" fill="#6c6c6c"/><path d="M.6 2.600h5.800l1.100 1.700H.6z" fill="#777"/></svg></div>
<div class="tt" style="left:279.0px;top:743.7px">Footer</div>
<div class="hl" style="left:237.5px;top:769.5px;width:16.3px"></div>
<div class="ti" style="left:259.2px;top:762.3px"><svg width="14.4" height="14.4" viewBox="0 0 16 16" style=""><path d="M.6 2.600h5.800l1.200 1.800h7.800v9.400H.6z" fill="#8d8d8d"/><rect x=".6" y="5.300" width="14.800" height="1.100" fill="#6c6c6c"/><path d="M.6 2.600h5.800l1.100 1.700H.6z" fill="#777"/></svg></div>
<div class="tt" style="left:279.0px;top:761.7px">Shared Content</div>
<div class="hl" style="left:237.5px;top:787.5px;width:16.3px"></div>
<div class="ti" style="left:259.2px;top:780.3px"><svg width="14.4" height="14.4" viewBox="0 0 16 16" style=""><path d="M.6 2.600h5.800l1.200 1.800h7.800v9.400H.6z" fill="#8d8d8d"/><rect x=".6" y="5.300" width="14.800" height="1.100" fill="#6c6c6c"/><path d="M.6 2.600h5.800l1.100 1.700H.6z" fill="#777"/></svg></div>
<div class="tt" style="left:279.0px;top:779.7px">Grid Content</div>
<div class="hl" style="left:237.5px;top:805.5px;width:16.3px"></div>
<div class="ti" style="left:259.2px;top:798.3px"><svg width="14.4" height="14.4" viewBox="0 0 16 16" style=""><path d="M.6 2.600h5.800l1.200 1.800h7.800v9.400H.6z" fill="#8d8d8d"/><rect x=".6" y="5.300" width="14.800" height="1.100" fill="#6c6c6c"/><path d="M.6 2.600h5.800l1.100 1.700H.6z" fill="#777"/></svg></div>
<div class="tt" style="left:279.0px;top:797.7px">File Collections</div>
<div id="sb"></div>

<!-- doc header -->
<div id="dochead"></div>
<div class="abs" style="left:1280.500px;top:47.800px;font-size:11.500px;letter-spacing:.5px;white-space:nowrap;color:#111">Path: /</div>
<div class="abs" style="left:1322px;top:48.200px"><svg width="14.6" height="14.6" viewBox="0 0 16 16" style=""><circle cx="8" cy="8" r="7.4" fill="#3d8fd8"/><path d="M5.2 2.2c1.8-.9 4.2-.8 5.6.3-.5 1-.1 1.900-1.200 2.400-.9.400-.4 1.600-1.400 2-.8.300-1.800-.2-2.400.5-.7.900.400 1.800 1.400 1.900 1.100.100 1.500.9 1.300 1.900-.2 1.100-1.200 1.800-2.100 2.300-1.100-.6-1.200-2-1.700-3.100-.6-1.300-2.300-1.600-2.500-3.100-.2-1.900 1.200-4 3-5.100z" fill="#7db53a"/><path d="M11.8 7.200c.9-.3 2 .2 2.600 1-.1 1.600-.9 3.200-2.100 4.200-.7-.5-.6-1.400-.4-2.100.2-.9-.8-1.300-.7-2.100 0-.5.200-.9.600-1z" fill="#7db53a"/><circle cx="8" cy="8" r="7.4" fill="none" stroke="#2b6cb0" stroke-width=".5" opacity=".6"/></svg></div>
<div class="abs" style="left:1340px;top:47.600px;font-size:12.500px;font-weight:bold;letter-spacing:.47px;white-space:nowrap;color:#111">Welcome [1]</div>
<div class="btn" style="left:1367.300px;top:71.300px;width:23.400px;height:23.200px"></div>
<svg class="abs" style="left:1371.300px;top:75.200px" width="15.400" height="15.400" viewBox="0 0 16 16"><path d="M2.900 7.600A5.200 5.200 0 0 1 12.400 5.200" fill="none" stroke="#111" stroke-width="1.600"/><path d="M13.100 8.400A5.200 5.200 0 0 1 3.600 10.800" fill="none" stroke="#111" stroke-width="1.600"/><path d="M10.200 5.800h5l-2.300 3.600zM5.800 10.200h-5l2.300-3.600z" fill="#111"/></svg>
<div class="btn" style="left:1395.300px;top:71.300px;width:23.200px;height:23.200px"></div>
<svg class="abs" style="left:1398.300px;top:74.300px" width="17.200" height="17.200" viewBox="0 0 16 16"><path d="M8 1.800l1.900 4.100 4.500.5-3.300 3.100.9 4.400L8 11.700l-4 2.200.9-4.400L1.600 6.400l4.500-.5z" fill="none" stroke="#111" stroke-width="1.300" stroke-linejoin="round"/></svg>

<!-- content -->
<h1>Recycler</h1>
<div class="inp" style="left:508px;top:172px;width:174px;height:29px;border-radius:2px 0 0 2px"></div>
<div class="inp" style="left:681.500px;top:172px;width:26.500px;height:29px;background:#f0f0f0;border-radius:0 2px 2px 0;box-shadow:none"></div>
<svg class="abs" style="left:688px;top:179.500px" width="14" height="14" viewBox="0 0 14 14"><circle cx="5.700" cy="5.700" r="4.300" fill="none" stroke="#333" stroke-width="1.300"/><path d="M8.900 8.900l4 4" stroke="#333" stroke-width="1.600"/></svg>
<div class="inp sel" style="left:723px;top:172px;width:107.500px;height:29px"><span>This page</span><svg width="9.600" height="6.600" viewBox="0 0 9.600 6.600"><path d="M1 1.200l3.800 3.800 3.800-3.800" fill="none" stroke="#111" stroke-width="2"/></svg></div>
<div class="inp sel" style="left:845.300px;top:172px;width:149px;height:29px;border-color:#999"><span>Page (7)</span><svg width="9.600" height="6.600" viewBox="0 0 9.600 6.600"><path d="M1 1.200l3.800 3.800 3.800-3.800" fill="none" stroke="#111" stroke-width="2"/></svg></div>

<div id="tbl"></div>
<div id="thead"></div>
<div class="btn" style="left:514px;top:223px;width:27px;height:28.500px;background:#dedede;border-color:#d0d0d0;box-shadow:none"></div>
<svg class="abs" style="left:520.300px;top:230.300px" width="14.600" height="14.600" viewBox="0 0 16 16"><rect x="1.500" y="1.500" width="12.600" height="12.800" fill="#fff" stroke="#0a0a0a" stroke-width="1.700"/><path d="M3.400 4.400h8.800" stroke="#0a0a0a" stroke-width="1.900"/><path d="M3.400 7.300h8.800M3.400 10h3.400" stroke="#333" stroke-width="1.200"/><path d="M6.800 11.200l2.700 2.700 5.200-5.300" fill="none" stroke="#fff" stroke-width="4"/><path d="M7.200 11.300l2.300 2.300 4.800-4.900" fill="none" stroke="#0a0a0a" stroke-width="2.300"/></svg>
<div class="th" style="left:580.500px">Record Type</div>
<div class="th" style="left:725.500px">Record</div>
<div class="th" style="left:1067.500px;letter-spacing:.75px">UID</div>
<div class="th" style="left:1126px;letter-spacing:.75px">PID</div>
<div class="tr" style="top:257px"></div>
<div class="tr" style="top:258px;background:#ececec"></div>
<div class="tr" style="top:298px"></div>
<div class="tr" style="top:338px"></div>
<div class="tr" style="top:339px;background:#ececec"></div>
<div class="tr" style="top:379px"></div>
<div class="tr" style="top:419px"></div>
<div class="tr" style="top:420px;background:#ececec"></div>
<div class="tr" style="top:460px"></div>
<div class="tr" style="top:500px"></div>
<div class="tr" style="top:501px;background:#ececec"></div>
<div class="cb" style="top:263.8px"><i></i></div>
<div class="td" style="left:580.5px;top:269.7px;letter-spacing:-.3px">Page</div>
<div class="ti" style="left:725.2px;top:270.5px"><svg width="14.4" height="14.4" viewBox="0 0 16 16" style="overflow:visible"><path d="M.6 2.600h5.800l1.200 1.800h7.800v9.400H.6z" fill="#8d8d8d"/><rect x=".6" y="5.300" width="14.800" height="1.100" fill="#6c6c6c"/><path d="M.6 2.600h5.800l1.100 1.700H.6z" fill="#777"/></svg></div>
<div class="td" style="left:743.5px;top:269.7px;">Meta</div>
<div class="td" style="left:1067.5px;top:269.7px;letter-spacing:.55px">152</div>
<div class="td" style="left:1126px;top:269.7px">Welcome (1)</div>
<div class="bg2" style="top:263.8px"><b></b><span style="left:5.9px"><svg width="14.4" height="14.4" viewBox="0 0 16 16" style=""><path d="M4.300 4.300A5.300 5.300 0 1 1 2.800 9.600" fill="none" stroke="#111" stroke-width="1.600"/><path d="M1.400 2.400l5.200.6-3.900 4z" fill="#111"/></svg></span><span style="left:32.2px"><svg width="14.4" height="14.4" viewBox="0 0 16 16" style=""><path d="M3.300 4.800h9.400l-.8 10H4.100z" fill="none" stroke="#111" stroke-width="1.500" stroke-linejoin="round"/><path d="M1.800 4.100h12.400" stroke="#111" stroke-width="1.700"/><path d="M5.600 3.600V1.800h4.800v1.800" fill="none" stroke="#111" stroke-width="1.500"/><path d="M6.400 6.600v6.600M9.600 6.600v6.600" stroke="#111" stroke-width="1.250"/></svg></span></div>
<div class="bi" style="top:263.8px"><span><svg width="14.4" height="14.4" viewBox="0 0 16 16" style=""><path d="M8 .8l1.700 1.700L8 4.200 6.300 2.500z" fill="#111"/><path d="M5 6h4.400v6.600H11v1.900H5v-1.900h1.800V7.900H5z" fill="#111"/></svg></span></div>
<div class="cb" style="top:304.3px"><i></i></div>
<div class="td" style="left:580.5px;top:310.2px;letter-spacing:-.3px">Page</div>
<div class="ti" style="left:725.2px;top:311.0px"><svg width="14.4" height="14.4" viewBox="0 0 16 16" style="overflow:visible"><g opacity=".8"><path d="M2.5 .6h7.3l3.700 3.700v11.100h-11z" fill="#f6f6f6" stroke="#a2a2a2" stroke-width="1"/><path d="M9.800 .6v3.700h3.700z" fill="#dcdcdc" stroke="#a2a2a2" stroke-width="1" stroke-linejoin="round"/></g><circle cx="10.9" cy="10.6" r="5.4" fill="#c8262d"/><circle cx="10.9" cy="10.6" r="4.9" fill="none" stroke="#a81c22" stroke-width=".6" opacity=".6"/><rect x="7.800000000000001" y="9.65" width="6.200" height="1.900" rx=".5" fill="#fff"/></svg></div>
<div class="td" style="left:743.5px;top:310.2px;">Test</div>
<div class="td" style="left:1067.5px;top:310.2px;letter-spacing:.55px">154</div>
<div class="td" style="left:1126px;top:310.2px">Welcome (1)</div>
<div class="bg2" style="top:304.3px"><b></b><span style="left:5.9px"><svg width="14.4" height="14.4" viewBox="0 0 16 16" style=""><path d="M4.300 4.300A5.300 5.300 0 1 1 2.800 9.600" fill="none" stroke="#111" stroke-width="1.600"/><path d="M1.400 2.400l5.200.6-3.900 4z" fill="#111"/></svg></span><span style="left:32.2px"><svg width="14.4" height="14.4" viewBox="0 0 16 16" style=""><path d="M3.300 4.800h9.400l-.8 10H4.100z" fill="none" stroke="#111" stroke-width="1.500" stroke-linejoin="round"/><path d="M1.800 4.100h12.400" stroke="#111" stroke-width="1.700"/><path d="M5.600 3.600V1.800h4.800v1.800" fill="none" stroke="#111" stroke-width="1.500"/><path d="M6.400 6.600v6.600M9.600 6.600v6.600" stroke="#111" stroke-width="1.250"/></svg></span></div>
<div class="bi" style="top:304.3px"><span><svg width="14.4" height="14.4" viewBox="0 0 16 16" style=""><path d="M8 .8l1.700 1.700L8 4.200 6.300 2.500z" fill="#111"/><path d="M5 6h4.400v6.600H11v1.900H5v-1.900h1.800V7.900H5z" fill="#111"/></svg></span></div>
<div class="cb" style="top:344.8px"><i></i></div>
<div class="td" style="left:580.5px;top:350.7px;letter-spacing:-.3px">Page</div>
<div class="ti" style="left:725.2px;top:351.5px"><svg width="14.4" height="14.4" viewBox="0 0 16 16" style="overflow:visible"><g opacity=".8"><path d="M2.5 .6h7.3l3.700 3.700v11.100h-11z" fill="#f6f6f6" stroke="#a2a2a2" stroke-width="1"/><path d="M9.800 .6v3.700h3.700z" fill="#dcdcdc" stroke="#a2a2a2" stroke-width="1" stroke-linejoin="round"/></g><circle cx="10.9" cy="10.6" r="5.4" fill="#c8262d"/><circle cx="10.9" cy="10.6" r="4.9" fill="none" stroke="#a81c22" stroke-width=".6" opacity=".6"/><rect x="7.800000000000001" y="9.65" width="6.200" height="1.900" rx=".5" fill="#fff"/></svg></div>
<div class="td" style="left:743.5px;top:350.7px;">Login</div>
<div class="td" style="left:903px;top:350.7px;letter-spacing:.6px">27-10-17 23:52</div>
<div class="td" style="left:1067.5px;top:350.7px;letter-spacing:.55px">155</div>
<div class="td" style="left:1126px;top:350.7px">Welcome (1)</div>
<div class="bg2" style="top:344.8px"><b></b><span style="left:5.9px"><svg width="14.4" height="14.4" viewBox="0 0 16 16" style=""><path d="M4.300 4.300A5.300 5.300 0 1 1 2.800 9.600" fill="none" stroke="#111" stroke-width="1.600"/><path d="M1.400 2.400l5.200.6-3.900 4z" fill="#111"/></svg></span><span style="left:32.2px"><svg width="14.4" height="14.4" viewBox="0 0 16 16" style=""><path d="M3.300 4.800h9.400l-.8 10H4.100z" fill="none" stroke="#111" stroke-width="1.500" stroke-linejoin="round"/><path d="M1.800 4.100h12.400" stroke="#111" stroke-width="1.700"/><path d="M5.600 3.600V1.800h4.800v1.800" fill="none" stroke="#111" stroke-width="1.500"/><path d="M6.400 6.600v6.600M9.600 6.600v6.600" stroke="#111" stroke-width="1.250"/></svg></span></div>
<div class="bi" style="top:344.8px"><span><svg width="14.4" height="14.4" viewBox="0 0 16 16" style=""><path d="M8 .8l1.700 1.700L8 4.200 6.300 2.500z" fill="#111"/><path d="M5 6h4.400v6.600H11v1.900H5v-1.900h1.800V7.900H5z" fill="#111"/></svg></span></div>
<div class="cb" style="top:385.3px"><i></i></div>
<div class="td" style="left:580.5px;top:391.2px;letter-spacing:-.3px">Page</div>
<div class="ti" style="left:725.2px;top:392.0px"><svg width="14.4" height="14.4" viewBox="0 0 16 16" style="overflow:visible"><g opacity=".8"><path d="M2.5 .6h7.3l3.700 3.700v11.100h-11z" fill="#f6f6f6" stroke="#a2a2a2" stroke-width="1"/><path d="M9.800 .6v3.700h3.700z" fill="#dcdcdc" stroke="#a2a2a2" stroke-width="1" stroke-linejoin="round"/></g><circle cx="10.9" cy="10.6" r="5.4" fill="#c8262d"/><circle cx="10.9" cy="10.6" r="4.9" fill="none" stroke="#a81c22" stroke-width=".6" opacity=".6"/><rect x="7.800000000000001" y="9.65" width="6.200" height="1.900" rx=".5" fill="#fff"/></svg></div>
<div class="td" style="left:743.5px;top:391.2px;">Examples</div>
<div class="td" style="left:903px;top:391.2px;letter-spacing:.6px">25-03-18 23:27</div>
<div class="td" style="left:1067.5px;top:391.2px;letter-spacing:.55px">161</div>
<div class="td" style="left:1126px;top:391.2px">Welcome (1)</div>
<div class="bg2" style="top:385.3px"><b></b><span style="left:5.9px"><svg width="14.4" height="14.4" viewBox="0 0 16 16" style=""><path d="M4.300 4.300A5.300 5.300 0 1 1 2.800 9.600" fill="none" stroke="#111" stroke-width="1.600"/><path d="M1.400 2.400l5.200.6-3.900 4z" fill="#111"/></svg></span><span style="left:32.2px"><svg width="14.4" height="14.4" viewBox="0 0 16 16" style=""><path d="M3.300 4.800h9.400l-.8 10H4.100z" fill="none" stroke="#111" stroke-width="1.500" stroke-linejoin="round"/><path d="M1.800 4.100h12.400" stroke="#111" stroke-width="1.700"/><path d="M5.600 3.600V1.800h4.800v1.800" fill="none" stroke="#111" stroke-width="1.500"/><path d="M6.400 6.600v6.600M9.600 6.600v6.600" stroke="#111" stroke-width="1.250"/></svg></span></div>
<div class="bi" style="top:385.3px"><span><svg width="14.4" height="14.4" viewBox="0 0 16 16" style=""><path d="M8 .8l1.700 1.700L8 4.200 6.300 2.500z" fill="#111"/><path d="M5 6h4.400v6.600H11v1.900H5v-1.900h1.800V7.900H5z" fill="#111"/></svg></span></div>
<div class="cb" style="top:425.8px"><i></i></div>
<div class="td" style="left:580.5px;top:431.7px;letter-spacing:-.3px">Page</div>
<div class="ti" style="left:725.2px;top:432.5px"><svg width="14.4" height="14.4" viewBox="0 0 16 16" style="overflow:visible"><g opacity=".8"><path d="M2.5 .6h7.3l3.700 3.700v11.100h-11z" fill="#f6f6f6" stroke="#a2a2a2" stroke-width="1"/><path d="M9.800 .6v3.700h3.700z" fill="#dcdcdc" stroke="#a2a2a2" stroke-width="1" stroke-linejoin="round"/></g><circle cx="10.9" cy="10.6" r="5.4" fill="#c8262d"/><circle cx="10.9" cy="10.6" r="4.9" fill="none" stroke="#a81c22" stroke-width=".6" opacity=".6"/><rect x="7.800000000000001" y="9.65" width="6.200" height="1.900" rx=".5" fill="#fff"/></svg></div>
<div class="td" style="left:743.5px;top:431.7px;">Changelog</div>
<div class="td" style="left:903px;top:431.7px;letter-spacing:.6px">30-11-17 13:28</div>
<div class="td" style="left:1067.5px;top:431.7px;letter-spacing:.55px">176</div>
<div class="td" style="left:1126px;top:431.7px">Welcome (1)</div>
<div class="bg2" style="top:425.8px"><b></b><span style="left:5.9px"><svg width="14.4" height="14.4" viewBox="0 0 16 16" style=""><path d="M4.300 4.300A5.300 5.300 0 1 1 2.800 9.600" fill="none" stroke="#111" stroke-width="1.600"/><path d="M1.400 2.400l5.200.6-3.900 4z" fill="#111"/></svg></span><span style="left:32.2px"><svg width="14.4" height="14.4" viewBox="0 0 16 16" style=""><path d="M3.300 4.800h9.400l-.8 10H4.100z" fill="none" stroke="#111" stroke-width="1.500" stroke-linejoin="round"/><path d="M1.800 4.100h12.400" stroke="#111" stroke-width="1.700"/><path d="M5.600 3.600V1.800h4.800v1.800" fill="none" stroke="#111" stroke-width="1.500"/><path d="M6.400 6.600v6.600M9.600 6.600v6.600" stroke="#111" stroke-width="1.250"/></svg></span></div>
<div class="bi" style="top:425.8px"><span><svg width="14.4" height="14.4" viewBox="0 0 16 16" style=""><path d="M8 .8l1.700 1.700L8 4.200 6.300 2.500z" fill="#111"/><path d="M5 6h4.400v6.600H11v1.900H5v-1.900h1.800V7.900H5z" fill="#111"/></svg></span></div>
<div class="cb" style="top:466.3px"><i></i></div>
<div class="td" style="left:580.5px;top:472.2px;letter-spacing:-.3px">Page</div>
<div class="ti" style="left:725.2px;top:473.0px"><svg width="14.4" height="14.4" viewBox="0 0 16 16" style="overflow:visible"><g opacity=".8"><rect x="1" y="7.100" width="14" height="1.800" fill="#262626"/><path d="M8 2.300l2.500 2.800h-5z M8 13.800l2.500-2.800h-5z" fill="#8a8a8a"/></g><circle cx="10.9" cy="10.6" r="5.4" fill="#c8262d"/><circle cx="10.9" cy="10.6" r="4.9" fill="none" stroke="#a81c22" stroke-width=".6" opacity=".6"/><rect x="7.800000000000001" y="9.65" width="6.200" height="1.900" rx=".5" fill="#fff"/></svg></div>
<div class="td" style="left:743.5px;top:472.2px;letter-spacing:.55px;">[Default Title]</div>
<div class="td" style="left:903px;top:472.2px;letter-spacing:.6px">23-11-18 14:09</div>
<div class="td" style="left:1067.5px;top:472.2px;letter-spacing:.55px">200</div>
<div class="td" style="left:1126px;top:472.2px">Welcome (1)</div>
<div class="bg2" style="top:466.3px"><b></b><span style="left:5.9px"><svg width="14.4" height="14.4" viewBox="0 0 16 16" style=""><path d="M4.300 4.300A5.300 5.300 0 1 1 2.800 9.600" fill="none" stroke="#111" stroke-width="1.600"/><path d="M1.400 2.400l5.200.6-3.900 4z" fill="#111"/></svg></span><span style="left:32.2px"><svg width="14.4" height="14.4" viewBox="0 0 16 16" style=""><path d="M3.300 4.800h9.400l-.8 10H4.100z" fill="none" stroke="#111" stroke-width="1.500" stroke-linejoin="round"/><path d="M1.800 4.100h12.400" stroke="#111" stroke-width="1.700"/><path d="M5.600 3.600V1.800h4.800v1.800" fill="none" stroke="#111" stroke-width="1.500"/><path d="M6.400 6.600v6.600M9.600 6.600v6.600" stroke="#111" stroke-width="1.250"/></svg></span></div>
<div class="bi" style="top:466.3px"><span><svg width="14.4" height="14.4" viewBox="0 0 16 16" style=""><path d="M8 .8l1.700 1.700L8 4.200 6.300 2.500z" fill="#111"/><path d="M5 6h4.400v6.600H11v1.900H5v-1.900h1.800V7.900H5z" fill="#111"/></svg></span></div>
<div class="cb" style="top:506.8px"><i></i></div>
<div class="td" style="left:580.5px;top:512.7px;letter-spacing:-.3px">Page</div>
<div class="ti" style="left:725.2px;top:513.5px"><svg width="14.4" height="14.4" viewBox="0 0 16 16" style="overflow:visible"><path d="M2.5 .6h7.3l3.700 3.700v11.100h-11z" fill="#f6f6f6" stroke="#a2a2a2" stroke-width="1"/><path d="M9.800 .6v3.700h3.700z" fill="#dcdcdc" stroke="#a2a2a2" stroke-width="1" stroke-linejoin="round"/></svg></div>
<div class="td" style="left:743.5px;top:512.7px;">404</div>
<div class="td" style="left:903px;top:512.7px;letter-spacing:.6px">04-02-19 14:52</div>
<div class="td" style="left:1067.5px;top:512.7px;letter-spacing:.55px">206</div>
<div class="td" style="left:1126px;top:512.7px">Welcome (1)</div>
<div class="bg2" style="top:506.8px"><b></b><span style="left:5.9px"><svg width="14.4" height="14.4" viewBox="0 0 16 16" style=""><path d="M4.300 4.300A5.300 5.300 0 1 1 2.800 9.600" fill="none" stroke="#111" stroke-width="1.600"/><path d="M1.400 2.400l5.200.6-3.900 4z" fill="#111"/></svg></span><span style="left:32.2px"><svg width="14.4" height="14.4" viewBox="0 0 16 16" style=""><path d="M3.300 4.800h9.400l-.8 10H4.100z" fill="none" stroke="#111" stroke-width="1.500" stroke-linejoin="round"/><path d="M1.800 4.100h12.400" stroke="#111" stroke-width="1.700"/><path d="M5.600 3.600V1.800h4.800v1.800" fill="none" stroke="#111" stroke-width="1.500"/><path d="M6.400 6.600v6.600M9.600 6.600v6.600" stroke="#111" stroke-width="1.250"/></svg></span></div>
<div class="bi" style="top:506.8px"><span><svg width="14.4" height="14.4" viewBox="0 0 16 16" style=""><path d="M8 .8l1.700 1.700L8 4.200 6.300 2.500z" fill="#111"/><path d="M5 6h4.400v6.600H11v1.900H5v-1.900h1.800V7.900H5z" fill="#111"/></svg></span></div>

<div class="fbtn" style="left:508px;width:73px"><svg width="14.4" height="14.4" viewBox="0 0 16 16" style=""><path d="M4.300 4.300A5.300 5.300 0 1 1 2.800 9.600" fill="none" stroke="#333" stroke-width="1.600"/><path d="M1.400 2.400l5.200.6-3.900 4z" fill="#333"/></svg><span style="letter-spacing:-.1px">Recover</span></div>
<div class="fbtn" style="left:585px;width:66px"><svg width="14.4" height="14.4" viewBox="0 0 16 16" style=""><path d="M3.300 4.800h9.400l-.8 10H4.100z" fill="none" stroke="#333" stroke-width="1.500" stroke-linejoin="round"/><path d="M1.800 4.100h12.400" stroke="#333" stroke-width="1.700"/><path d="M5.600 3.600V1.800h4.800v1.800" fill="none" stroke="#333" stroke-width="1.500"/><path d="M6.400 6.600v6.600M9.600 6.600v6.600" stroke="#333" stroke-width="1.250"/></svg><span>Delete</span></div>

<div class="dd">
<div class="op" style="top:0.0px"><span style="letter-spacing:.34px">All Record Types (29)</span></div>
<div class="op sel" style="top:28.9px"><span style="letter-spacing:.34px;margin-top:.4px">Page (7)</span></div>
<div class="op" style="top:57.7px"><span style="letter-spacing:.34px;margin-top:.4px">File Reference (11)</span></div>
<div class="op" style="top:86.6px"><span style="letter-spacing:.34px;margin-top:.4px">Page Content (10)</span></div>
<div class="op" style="top:115.4px"><span style="letter-spacing:.55px;margin-top:.4px">Carousel Item (1)</span></div>
</div>

</div>
</body></html>
